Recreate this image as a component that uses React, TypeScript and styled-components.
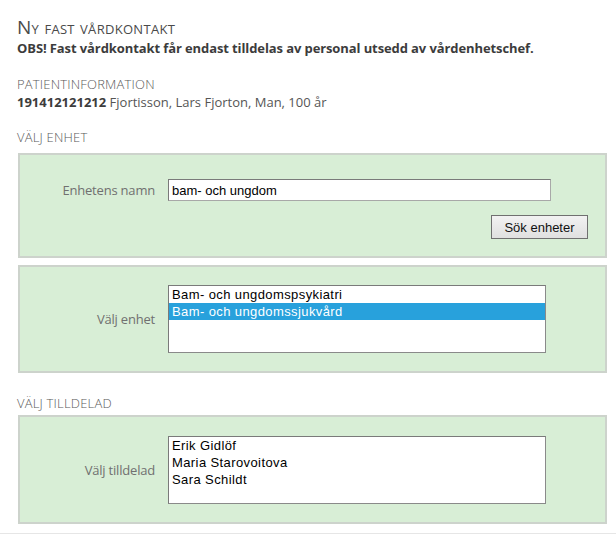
import React from "react";
import styled, { createGlobalStyle } from "styled-components";

const GlobalStyle = createGlobalStyle`
  html, body { margin: 0; padding: 0; background: #fff; }
  body { font-family: "Open Sans", "Noto Sans", sans-serif; color: #444; }
`;

const Page = styled.div`
  height: 534px;
  box-sizing: border-box;
  padding: 15px 9px 0 17px;
  border-bottom: 1px solid #e6e6e6;
`;

const Title = styled.h1`
  margin: 0;
  font-size: 19px;
  font-weight: 400;
  font-variant: small-caps;
  line-height: 24px;
  color: #4a4a4a;
  letter-spacing: 0.3px;
`;

const Notice = styled.p`
  margin: 0;
  font-size: 13px;
  font-weight: 700;
  line-height: 18px;
  color: #3c3c3c;
  letter-spacing: -0.1px;
`;

const SectionTitle = styled.h2<{ $top: number }>`
  margin: ${(p) => p.$top}px 0 0 0;
  font-size: 13px;
  font-weight: 300;
  text-transform: uppercase;
  line-height: 18px;
  color: #5a5a5a;
  letter-spacing: 0.2px;
`;

const PatientLine = styled.p`
  margin: 0;
  font-size: 13px;
  line-height: 18px;
  color: #555;
  b { font-weight: 700; color: #3c3c3c; }
`;

const Panel = styled.div<{ $pt: number; $pb: number; $mt: number }>`
  margin: ${(p) => p.$mt}px 0 0 1px;
  background: #d8eed6;
  border: 2px solid #cdd3cc;
  padding: ${(p) => p.$pt}px 0 ${(p) => p.$pb}px 0;
  display: flex;
  flex-direction: column;
  gap: 14px;
`;

const Row = styled.div`
  display: grid;
  grid-template-columns: 135px 378px;
  column-gap: 13px;
  align-items: center;
`;

const Label = styled.label`
  text-align: right;
  font-size: 13px;
  color: #707070;
  letter-spacing: -0.2px;
`;

const TextInput = styled.input`
  box-sizing: border-box;
  height: 22px;
  width: 383px;
  margin: 0;
  padding: 0 3px;
  border: 1px solid #7a7a7a;
  border-bottom-color: #a8a8a8;
  border-right-color: #a8a8a8;
  font-family: "Liberation Sans", Arial, sans-serif;
  font-size: 13px;
  color: #000;
  background: #fff;
  outline: none;
`;

const ButtonRow = styled.div`
  display: flex;
  justify-content: flex-end;
  padding-right: 17px;
`;

const Button = styled.button`
  box-sizing: border-box;
  width: 97px;
  height: 24px;
  border: 1px solid #707070;
  background: linear-gradient(#f2f2f2, #e0e0e0);
  font-family: "Liberation Sans", Arial, sans-serif;
  font-size: 13px;
  color: #111;
  padding: 0;
`;

const ListBox = styled.ul`
  box-sizing: border-box;
  list-style: none;
  margin: 0;
  padding: 0;
  width: 378px;
  height: 68px;
  border: 1px solid #8a8a8a;
  border-top-color: #7a7a7a;
  border-left-color: #7a7a7a;
  background: #fff;
  overflow: hidden;
`;

const Option = styled.li<{ $selected?: boolean }>`
  height: 17px;
  line-height: 17px;
  padding: 0 3px;
  font-family: "Liberation Sans", Arial, sans-serif;
  font-size: 13px;
  letter-spacing: 0.4px;
  color: ${(p) => (p.$selected ? "#fff" : "#000")};
  background: ${(p) => (p.$selected ? "#28a1dc" : "transparent")};
  white-space: nowrap;
`;

export default function App() {
  return (
    <>
      <GlobalStyle />
      <Page>
        <Title>Ny fast vårdkontakt</Title>
        <Notice>
          OBS! Fast vårdkontakt får endast tilldelas av personal utsedd av vårdenhetschef.
        </Notice>

        <SectionTitle $top={18}>Patientinformation</SectionTitle>
        <PatientLine>
          <b>191412121212</b> Fjortisson, Lars Fjorton, Man, 100 år
        </PatientLine>

        <SectionTitle $top={17}>Välj enhet</SectionTitle>
        <Panel $mt={7} $pt={24} $pb={17}>
          <Row>
            <Label>Enhetens namn</Label>
            <TextInput defaultValue="bam- och ungdom" />
          </Row>
          <ButtonRow>
            <Button>Sök enheter</Button>
          </ButtonRow>
        </Panel>
        <Panel $mt={7} $pt={18} $pb={18}>
          <Row>
            <Label>Välj enhet</Label>
            <ListBox>
              <Option>Bam- och ungdomspsykiatri</Option>
              <Option $selected>Bam- och ungdomssjukvård</Option>
            </ListBox>
          </Row>
        </Panel>

        <SectionTitle $top={21}>Välj tilldelad</SectionTitle>
        <Panel $mt={3} $pt={19} $pb={18}>
          <Row>
            <Label>Välj tilldelad</Label>
            <ListBox>
              <Option>Erik Gidlöf</Option>
              <Option>Maria Starovoitova</Option>
              <Option>Sara Schildt</Option>
            </ListBox>
          </Row>
        </Panel>
      </Page>
    </>
  );
}
